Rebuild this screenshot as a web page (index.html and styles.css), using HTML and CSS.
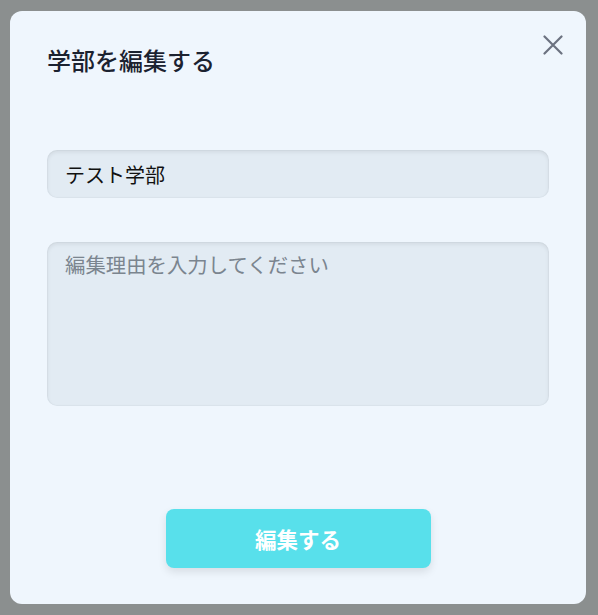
FILE: index.html
```html
<!DOCTYPE html>
<html lang="ja">
<head>
    <meta charset="UTF-8">
    <meta name="viewport" content="width=device-width, initial-scale=1.0">
    <title>学部を編集する</title>
    <link rel="stylesheet" href="styles.css">
</head>
<body>
    <div class="modal">
        <h2 class="modal-title">学部を編集する</h2>
        <button class="close-btn" aria-label="閉じる">
            <svg width="20" height="20" viewBox="0 0 20 20">
                <path d="M1.5 1.5 L18.5 18.5 M18.5 1.5 L1.5 18.5" stroke="currentColor" stroke-width="2.2" stroke-linecap="round" fill="none"/>
            </svg>
        </button>
        <form class="edit-form">
            <input type="text" class="form-control" value="テスト学部">
            <textarea class="form-control reason" placeholder="編集理由を入力してください"></textarea>
            <div class="actions">
                <button type="submit" class="btn">編集する</button>
            </div>
        </form>
    </div>
</body>
</html>
```

FILE: styles.css
```css
* {
    box-sizing: border-box;
    margin: 0;
    padding: 0;
}

html, body {
    height: 100%;
}

body {
    font-family: 'Noto Sans CJK JP', 'Noto Sans', sans-serif;
    background-color: #8b8f8f;
    padding: 11px 12px 11px 10px;
    display: flex;
}

.modal {
    position: relative;
    flex: 1;
    display: flex;
    flex-direction: column;
    background-color: #eff6fd;
    border-radius: 12px;
    padding: 32px 37px 36px;
}

.modal-title {
    font-size: 24px;
    font-weight: 500;
    line-height: 34px;
    color: #1b2230;
}

.close-btn {
    position: absolute;
    top: 24px;
    right: 23px;
    background: none;
    border: none;
    color: #6b7280;
    cursor: pointer;
    display: flex;
}

.edit-form {
    flex: 1;
    display: flex;
    flex-direction: column;
    margin-top: 73px;
}

.form-control {
    width: 100%;
    background-color: #e2ebf3;
    border: none;
    border-radius: 10px;
    box-shadow: inset 0 2px 4px rgba(0, 0, 0, 0.08), inset 0 0 0 1px rgba(0, 0, 0, 0.025);
    font-family: inherit;
    font-size: 20px;
    color: #111;
    padding: 0 18px;
    height: 48px;
    outline: none;
}

.reason {
    margin-top: 44px;
    height: 164px;
    padding: 7px 18px;
    resize: none;
    line-height: 1.5;
    font-size: 20.4px;
}

.reason::placeholder {
    color: #7b858f;
}

.actions {
    margin-top: auto;
    display: flex;
    justify-content: center;
}

.btn {
    width: 265px;
    height: 59px;
    background-color: #58e0eb;
    color: white;
    border: none;
    border-radius: 8px;
    font-family: inherit;
    font-size: 21.5px;
    font-weight: 700;
    box-shadow: 0 4px 8px rgba(0, 0, 0, 0.1);
    cursor: pointer;
}
```
